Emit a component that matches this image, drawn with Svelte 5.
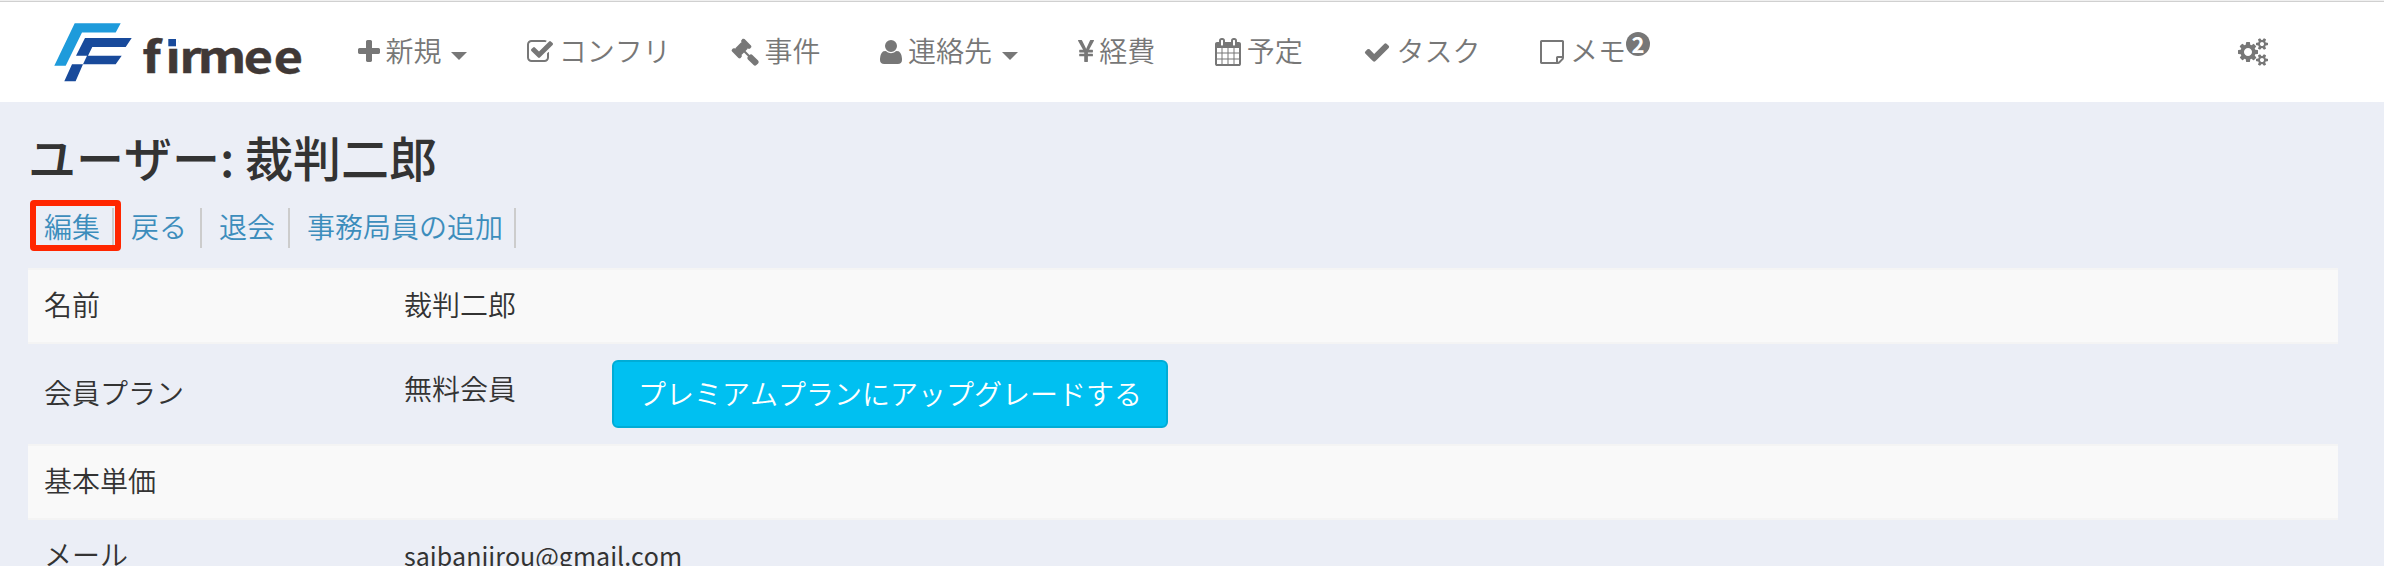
<script>
  const icons = {
    plus: { box: '192 0 1408 1792', w: 22, d: 'M1600 736v192q0 40-28 68t-68 28h-416v416q0 40-28 68t-68 28h-192q-40 0-68-28t-28-68v-416h-416q-40 0-68-28t-28-68v-192q0-40 28-68t68-28h416v-416q0-40 28-68t68-28h192q40 0 68 28t28 68v416h416q40 0 68 28t28 68z' },
    checkSquare: { box: '64 0 1664 1792', w: 26, d: 'M1472 930v318q0 119-84.5 203.5t-203.5 84.5h-832q-119 0-203.5-84.5t-84.5-203.5v-832q0-119 84.5-203.5t203.5-84.5h832q63 0 117 25 15 7 18 23 3 17-9 29l-49 49q-10 10-23 10-3 0-9-2-23-6-45-6h-832q-66 0-113 47t-47 113v832q0 66 47 113t113 47h832q66 0 113-47t47-113v-254q0-13 9-22l64-64q10-10 23-10 6 0 12 3 20 8 20 29zm231-489l-814 814q-24 24-57 24t-57-24l-430-430q-24-24-24-57t24-57l110-110q24-24 57-24t57 24l263 263 647-647q24-24 57-24t57 24l110 110q24 24 24 57t-24 57z' },
    gavel: { box: '0 0 1792 1792', w: 28, d: 'M1771 1536q0 53-37 90l-107 108q-39 37-91 37-53 0-90-37l-363-364q-38-36-38-90 0-53 43-96l-256-256-126 126q-14 14-34 14t-34-14q2 2 12.5 12t12.5 13 10 11.5 10 13.5 6 13.5 5.5 16.5 1.5 18q0 38-28 68-3 3-16.5 18t-19 20.5-18.5 16.5-22 15.5-22 9-26 4.5q-40 0-68-28l-408-408q-28-28-28-68 0-13 4.5-26t9-22 15.5-22 16.5-18.5 20.5-19 18-16.5q30-28 68-28 10 0 18 1.5t16.5 5.5 13.5 6 13.5 10 11.5 10 13 12.5 12 12.5q-14-14-14-34t14-34l348-348q14-14 34-14t34 14q-2-2-12.5-12t-12.5-13-10-11.5-10-13.5-6-13.5-5.5-16.5-1.5-18q0-38 28-68 3-3 16.5-18t19-20.5 18.5-16.5 22-15.5 22-9 26-4.5q40 0 68 28l408 408q28 28 28 68 0 13-4.5 26t-9 22-15.5 22-16.5 18.5-20.5 19-18 16.5q-30 28-68 28-10 0-18-1.5t-16.5-5.5-13.5-6-13.5-10-11.5-10-13-12.5-12-12.5q14 14 14 34t-14 34l-126 126 256 256q43-43 96-43 52 0 91 37l363 363q37 39 37 91z' },
    user: { box: '192 0 1408 1792', w: 22, d: 'M1600 1405q0 120-73 189.5t-194 69.5h-874q-121 0-194-69.5t-73-189.5q0-53 3.5-103.5t14-109 26.5-108.5 43-97.5 62-81 85.5-53.5 111.5-20q9 0 42 21.5t74.5 48 108 48 133.5 21.5 133.5-21.5 108-48 74.5-48 42-21.5q61 0 111.5 20t85.5 53.5 62 81 43 97.5 26.5 108.5 14 109 3.5 103.5zm-320-893q0 159-112.5 271.5t-271.5 112.5-271.5-112.5-112.5-271.5 112.5-271.5 271.5-112.5 271.5 112.5 112.5 271.5z' },
    yen: { box: '384 0 1024 1792', w: 16, d: 'M985.5 1536h-172q-13 0-22.5-9t-9.5-23v-330h-288q-13 0-22.5-9t-9.5-23v-103q0-13 9.5-22.5t22.5-9.5h288v-85h-288q-13 0-22.5-9t-9.5-23v-104q0-13 9.5-22.5t22.5-9.5h214l-321-578q-8-16 0-32 10-16 28-16h194q19 0 29 18l215 425q19 38 56 125 10-24 30.5-68t27.5-61l191-420q8-19 29-19h191q17 0 27 16 9 14 1 31l-313 579h215q13 0 22.5 9.5t9.5 22.5v104q0 14-9.5 23t-22.5 9h-290v85h290q13 0 22.5 9.5t9.5 22.5v103q0 14-9.5 23t-22.5 9h-290v330q0 13-9.5 22.5t-22.5 9.5z' },
    calendar: { box: '64 0 1664 1792', w: 26, d: 'M192 1664h288v-288h-288v288zm352 0h320v-288h-320v288zm-352-352h288v-320h-288v320zm352 0h320v-320h-320v320zm-352-384h288v-288h-288v288zm736 736h320v-288h-320v288zm-384-736h320v-288h-320v288zm768 736h288v-288h-288v288zm-384-352h320v-320h-320v320zm-352-864v-288q0-13-9.5-22.5t-22.5-9.5h-64q-13 0-22.5 9.5t-9.5 22.5v288q0 13 9.5 22.5t22.5 9.5h64q13 0 22.5-9.5t9.5-22.5zm736 864h288v-320h-288v320zm-384-384h320v-288h-320v288zm384 0h288v-288h-288v288zm32-480v-288q0-13-9.5-22.5t-22.5-9.5h-64q-13 0-22.5 9.5t-9.5 22.5v288q0 13 9.5 22.5t22.5 9.5h64q13 0 22.5-9.5t9.5-22.5zm384-64v1280q0 52-38 90t-90 38h-1408q-52 0-90-38t-38-90v-1280q0-52 38-90t90-38h128v-96q0-66 47-113t113-47h64q66 0 113 47t47 113v96h384v-96q0-66 47-113t113-47h64q66 0 113 47t47 113v96h128q52 0 90 38t38 90z' },
    check: { box: '0 0 1792 1792', w: 28, d: 'M1671 566q0 40-28 68l-724 724-136 136q-28 28-68 28t-68-28l-136-136-362-362q-28-28-28-68t28-68l136-136q28-28 68-28t68 28l294 295 656-657q28-28 68-28t68 28l136 136q28 28 28 68z' },
    note: { box: '0 0 1536 1792', w: 24, d: 'M1400 1280h-248v248q29-10 41-22l185-185q12-12 22-41zm-280-128h288v-896h-1280v1280h896v-288q0-40 28-68t68-28zm416-928v1024q0 40-20 88t-48 76l-184 184q-28 28-76 48t-88 20h-1024q-40 0-68-28t-28-68v-1344q0-40 28-68t68-28h1344q40 0 68 28t28 68z' },
    cogs: { box: '0 0 1920 1792', w: 30, d: 'M896 896q0-106-75-181t-181-75-181 75-75 181 75 181 181 75 181-75 75-181zm768 512q0-52-38-90t-90-38-90 38-38 90q0 53 37.5 90.5t90.5 37.5 90.5-37.5 37.5-90.5zm0-1024q0-52-38-90t-90-38-90 38-38 90q0 53 37.5 90.5t90.5 37.5 90.5-37.5 37.5-90.5zm-384 421v185q0 10-7 19.5t-16 10.5l-155 24q-11 35-32 76 34 48 90 115 7 11 7 20 0 12-7 19-23 30-82.5 89.5t-78.5 59.5q-11 0-21-7l-115-90q-37 19-77 31-11 108-23 155-7 24-30 24h-186q-11 0-20-7.5t-10-17.5l-23-153q-34-10-75-31l-118 89q-7 7-20 7-11 0-21-8-144-133-144-160 0-9 7-19 10-14 41-53t47-61q-23-44-35-82l-152-24q-10-1-17-9.5t-7-19.5v-185q0-10 7-19.5t16-10.5l155-24q11-35 32-76-34-48-90-115-7-11-7-20 0-12 7-20 22-30 82-89t79-59q11 0 21 7l115 90q34-18 77-32 11-108 23-154 7-24 30-24h186q11 0 20 7.5t10 17.5l23 153q34 10 75 31l118-89q8-7 20-7 11 0 21 8 144 133 144 160 0 8-7 19-12 16-42 54t-45 60q23 48 34 82l152 23q10 2 17 10.5t7 19.5zm640 533v140q0 16-149 31-12 27-30 52 51 113 51 138 0 4-4 7-122 71-124 71-8 0-46-47t-52-68q-20 2-30 2t-30-2q-14 21-52 68t-46 47q-2 0-124-71-4-3-4-7 0-25 51-138-18-25-30-52-149-15-149-31v-140q0-16 149-31 13-29 30-52-51-113-51-138 0-4 4-7 4-2 35-20t59-34 30-16q8 0 46 46.5t52 67.5q20-2 30-2t30 2q51-71 92-112l6-2q4 0 124 70 4 3 4 7 0 25-51 138 17 23 30 52 149 15 149 31zm0-1024v140q0 16-149 31-12 27-30 52 51 113 51 138 0 4-4 7-122 71-124 71-8 0-46-47t-52-68q-20 2-30 2t-30-2q-14 21-52 68t-46 47q-2 0-124-71-4-3-4-7 0-25 51-138-18-25-30-52-149-15-149-31v-140q0-16 149-31 13-29 30-52-51-113-51-138 0-4 4-7 4-2 35-20t59-34 30-16q8 0 46 46.5t52 67.5q20-2 30-2t30 2q51-71 92-112l6-2q4 0 124 70 4 3 4 7 0 25-51 138 17 23 30 52 149 15 149 31z' }
  };

  const menu = [
    { icon: 'plus', label: '新規', caret: true },
    { icon: 'checkSquare', label: 'コンフリ' },
    { icon: 'gavel', label: '事件' },
    { icon: 'user', label: '連絡先', caret: true },
    { icon: 'yen', label: '経費' },
    { icon: 'calendar', label: '予定' },
    { icon: 'check', label: 'タスク' },
    { icon: 'note', label: 'メモ', badge: '2' }
  ];

  const actions = ['編集', '戻る', '退会', '事務局員の追加'];
</script>

{#snippet glyph(name)}
  <svg class="icon" viewBox={icons[name].box} width={icons[name].w} height="28" aria-hidden="true">
    <path d={icons[name].d} />
  </svg>
{/snippet}

<div class="page">
  <header>
    <svg class="logo" viewBox="0 0 260 60" width="260" height="60">
      <path fill="#1e9bdb" d="M20.7 3.3H66.7L61.7 12.5H28L11.7 45.7H.3Z" />
      <path fill="#184a9b" d="M31 18H77.7L71.7 27H38.3L34 35.7H67.7L61.7 44.3H29L21.6 61.3H10.3L18 44.3H29L33 35.7H22Z" />
      <text transform="scale(1.17 1)" x="75.4 95.4 107.2 122.8 162.2 187.9" y="53.4">firmee</text>
      <rect x="112" y="13" width="12" height="14.5" fill="#fff" />
      <rect x="114.3" y="19" width="7.7" height="7.3" fill="#184a9b" />
    </svg>
    <nav>
      {#each menu as item}
        <a class="item" href="#top">
          {@render glyph(item.icon)}
          <span class="label">{item.label}</span>
          {#if item.caret}<span class="caret"></span>{/if}
          {#if item.badge}<span class="badge">{item.badge}</span>{/if}
        </a>
      {/each}
    </nav>
    <a class="settings" href="#top">{@render glyph('cogs')}</a>
  </header>

  <main>
    <h1>ユーザー: 裁判二郎</h1>
    <div class="actions">
      {#each actions as action, i}
        <a class="action" class:marked={i === 0} href="#top">{action}</a>
      {/each}
    </div>
    <div class="table">
      <div class="row"><div class="name">名前</div><div>裁判二郎</div></div>
      <div class="row plan">
        <div class="name">会員プラン</div>
        <div class="status">無料会員</div>
        <button>プレミアムプランにアップグレードする</button>
      </div>
      <div class="row"><div class="name">基本単価</div></div>
      <div class="row"><div class="name">メール</div><div><span class="mail">saibanjirou@gmail.com</span></div></div>
    </div>
  </main>
</div>

<style>
  .page {
    height: 566px;
    overflow: hidden;
    box-sizing: border-box;
    background: #ebeef6;
    color: #333;
    font: 350 28px/40px "Noto Sans CJK JP", sans-serif;
    font-kerning: none;
  }
  a { color: inherit; text-decoration: none; }
  header {
    display: flex;
    align-items: flex-start;
    box-sizing: border-box;
    height: 102px;
    padding: 0 116px 0 54px;
    background: linear-gradient(#f0f0f0 0 1px, #d0d0d0 1px 2px, #fff 2px);
    color: #777;
  }
  .logo { margin-top: 20px; overflow: visible; }
  .logo text {
    font: 700 43px "Noto Sans CJK JP", sans-serif;
    fill: #403836;
    stroke: #403836;
    stroke-width: 0.5px;
  }
  nav { display: flex; gap: 60px; margin: 30px 0 0 44px; }
  .item { display: flex; position: relative; }
  .icon { display: block; flex: none; margin: 8px 5.6px 0 0; fill: currentColor; }
  .caret {
    margin: 22px 0 0 9.6px;
    width: 0;
    height: 0;
    border: 8px solid transparent;
    border-top-color: currentColor;
    border-bottom: 0;
  }
  .badge {
    position: absolute;
    left: 100%;
    top: 2px;
    width: 24px;
    height: 24px;
    border-radius: 50%;
    background: #777;
    color: #fff;
    font-size: 22px;
    font-weight: 700;
    line-height: 22px;
    text-align: center;
  }
  .settings { margin: 30px 0 0 auto; }
  .settings .icon { margin-right: 0; }
  main { padding: 20px 46px 0 28px; }
  h1 {
    margin: 0;
    font-size: 48px;
    font-weight: 500;
    line-height: 68px;
  }
  .actions { display: flex; margin-top: 18px; height: 40px; color: #3c8dbc; }
  .action {
    position: relative;
    padding: 0 13px 0 17px;
    border-right: 2px solid #ccc;
    line-height: 36px;
  }
  .action:first-child { padding: 0 12px 0 16px; }
  .action:last-child { padding-right: 11px; }
  .marked::after {
    content: "";
    position: absolute;
    inset: -8px -9px -3px 2px;
    border: 6px solid #ff2600;
    border-radius: 4px;
  }
  .table { margin-top: 20px; }
  .row {
    display: flex;
    box-sizing: border-box;
    height: 74px;
    padding: 14px 16px;
    border-top: 2px solid #f4f4f4;
  }
  .row:nth-child(odd) { background: #f9f9f9; }
  .name { width: 360px; }
  .mail { font-size: 25px; font-weight: 400; }
  .plan { height: 102px; padding-top: 16px; }
  .plan .name { padding-top: 12px; }
  .status { width: 208px; padding-top: 8px; }
  button {
    height: 68px;
    padding: 0 24px 3px;
    border: 2px solid #00acd6;
    border-radius: 6px;
    background: #00c0f1;
    color: #fff;
    font: inherit;
    font-kerning: none;
  }
</style>
